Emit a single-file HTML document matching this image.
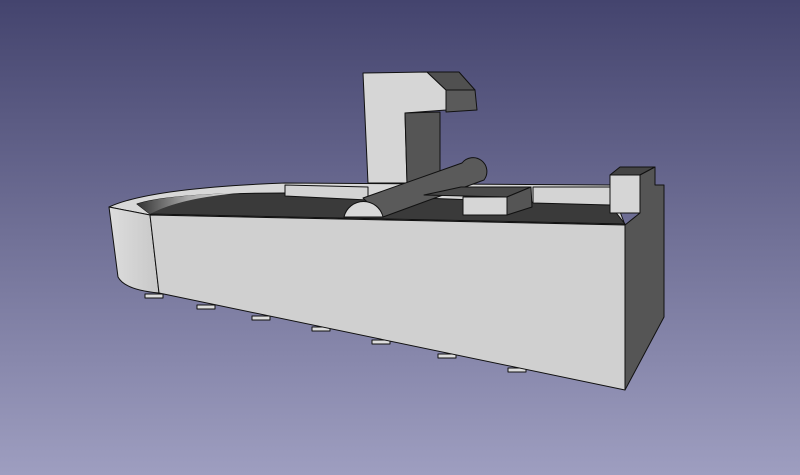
<!DOCTYPE html><html><head><style>html,body{margin:0;padding:0;width:800px;height:475px;overflow:hidden}html{background:#6e6e96}body{background:linear-gradient(#44446e,#9e9ec0)}</style></head><body>
<svg width="800" height="475" viewBox="0 0 800 475" xmlns="http://www.w3.org/2000/svg" style="display:block">
<defs><linearGradient id="g" x1="0" x2="1"><stop offset="0" stop-color="#333"/><stop offset="0.5" stop-color="#aaa"/><stop offset="1" stop-color="#e8e8e8"/></linearGradient>
<linearGradient id="lc" x1="0" x2="1"><stop offset="0" stop-color="#ddd"/><stop offset="1" stop-color="#c8c8c8"/></linearGradient></defs>
<g stroke="#111" stroke-width="1" stroke-linejoin="round">
<g fill="#ddd"><rect x="145" y="294" width="18" height="4"/><rect x="197" y="305" width="18" height="4"/><rect x="252" y="316" width="18" height="4"/><rect x="312" y="327" width="18" height="4"/><rect x="372" y="340" width="18" height="4"/><rect x="438" y="354" width="18" height="4"/><rect x="508" y="368" width="18" height="4"/></g>
<path d="M109,207 Q150,188 285,183 L610,185 L625,225 L150,215 Z" fill="#d8d8d8"/>
<path d="M137,204 Q170,193 285,193 L610,205 L625,224 L150,214 Z" fill="#3a3a3a"/>
<path d="M137,204 Q165,195 240,193 Q180,198 150,214 Z" fill="url(#g)" stroke="none"/>
<path d="M285,185 L368,187 L368,200 L285,196 Z" fill="#d4d4d4"/>
<path d="M533,187 L610,187 L610,205 L533,203 Z" fill="#d4d4d4"/>
<path d="M363,73 L427,72 L446,90 L446,110 L405,113 L407,183 L368,183 Z" fill="#d6d6d6"/>
<path d="M427,72 L459,72 L475,90 L446,90 Z" fill="#505050"/>
<path d="M446,90 L475,90 L477,110 L446,112 Z" fill="#5a5a5a"/>
<path d="M405,113 L440,112 L440,183 L407,183 Z" fill="#555"/>
<path d="M363,198 L462,163 A12,12 0 0 1 484,180 L383,217 Z" fill="#5a5a5a"/>
<path d="M344,217 A20,20 0 0 1 383,217 Z" fill="#d8d8d8"/>
<path d="M424,195 L461,187 L531,187 L507,197 Z" fill="#4a4a4a"/>
<path d="M463,197 L507,197 L507,215 L463,215 Z" fill="#d6d6d6"/>
<path d="M507,197 L531,187 L532,207 L507,215 Z" fill="#555"/>
<path d="M610,175 L640,175 L640,213 L610,213 Z" fill="#d6d6d6"/>
<path d="M610,175 L620,167 L655,167 L640,175 Z" fill="#444"/>
<path d="M640,175 L655,167 L655,185 L664,185 L664,317 L625,390 L625,225 L640,213 Z" fill="#555"/>
<path d="M109,207 L150,215 L159,293 Q125,290 118,277 Z" fill="url(#lc)"/>
<path d="M150,215 L625,225 L625,390 L159,293 Z" fill="#d0d0d0"/>
</g>
</svg>
</body></html>
